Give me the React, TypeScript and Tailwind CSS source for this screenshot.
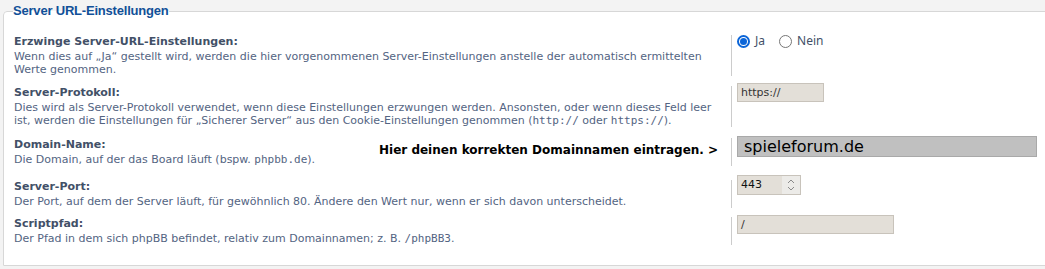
import React from "react";

const Code = ({ children }: { children: React.ReactNode }) => (
  <code className="font-['DejaVu_Sans_Mono',monospace] text-[11px] leading-[13px]">{children}</code>
);

function Row({
  label,
  desc,
  children,
  extra,
  pad,
}: {
  label: string;
  desc: React.ReactNode;
  children: React.ReactNode;
  extra?: React.ReactNode;
  pad: string;
}) {
  return (
    <div className={"flex " + pad}>
      <div className="w-[717px] shrink-0 relative">
        <div className="font-bold text-[#425067] leading-[14px]">{label}</div>
        <div className="text-[#536482] leading-[13px] mt-[1px]">{desc}</div>
        {extra}
      </div>
      <div className="border-l border-[#cccccc] pl-[5px] flex-1">{children}</div>
    </div>
  );
}

export default function App() {
  return (
    <div className="w-[1045px] h-[269px] overflow-hidden bg-[#f3f3f3] pt-[3px] font-['DejaVu_Sans',Verdana,sans-serif] text-[11px]">
      <fieldset className="ml-[3px] w-[1060px] bg-white border border-[#d7d7d7] rounded-tl-[4px] pl-[10px] pr-[20px] pb-[15px] pt-[11px]">
        <legend className="px-0 font-['Liberation_Sans',Arial,sans-serif] font-bold text-[13px] tracking-[-0.2px] text-[#115098] leading-[16px] ml-[-1px]">
          Server URL-Einstellungen
        </legend>
        <Row
          pad="pt-[5px] pb-[5px]"
          label="Erzwinge Server-URL-Einstellungen:"
          desc={
            <>
              <span className="block">
                Wenn dies auf „Ja“ gestellt wird, werden die hier vorgenommenen Server-Einstellungen anstelle der automatisch ermittelten
              </span>
              <span className="block">Werte genommen.</span>
            </>
          }
        >
          <div className="flex items-center h-[14px] mt-[-1px] font-['Noto_Sans',sans-serif] text-[12px] text-[#425067]">
            <span className="w-[13px] h-[13px] rounded-full border-2 border-[#0b65d8] flex items-center justify-center">
              <span className="w-[7px] h-[7px] rounded-full bg-[#0b65d8]" />
            </span>
            <span className="ml-[5px]">Ja</span>
            <span className="ml-[14px] w-[13px] h-[13px] rounded-full border border-[#767676]" />
            <span className="ml-[5px]">Nein</span>
          </div>
        </Row>
        <Row
          pad="pt-[5px] pb-[6px]"
          label="Server-Protokoll:"
          desc={
            <>
              <span className="block">
                Dies wird als Server-Protokoll verwendet, wenn diese Einstellungen erzwungen werden. Ansonsten, oder wenn dieses Feld leer
              </span>
              <span className="block">
                <span>ist, werden die Einstellungen für „Sicherer Server“ aus den Cookie-Einstellungen genommen (</span>
                <Code>http://</Code>
                <span> oder </span>
                <Code>https://</Code>
                <span>).</span>
              </span>
            </>
          }
        >
          <div className="mt-[-3px] w-[87px] h-[19px] bg-[#e3dfd8] border border-[#c8c3bb] text-[#333] leading-[17px] pl-[3px] font-['DejaVu_Sans',sans-serif] text-[11px]">
            https://
          </div>
        </Row>
        <Row
          pad="pt-[5px] pb-[9px]"
          label="Domain-Name:"
          desc={
            <>
              Die Domain, auf der das Board läuft (bspw. <Code>phpbb.de</Code>).
            </>
          }
          extra={
            <div className="absolute left-[365px] top-[3px] whitespace-nowrap font-['DejaVu_Sans',sans-serif] font-bold text-[12px] text-black">
              Hier deinen korrekten Domainnamen eintragen. &gt;
            </div>
          }
        >
          <div className="mt-[-2px] w-[300px] h-[21px] bg-[#c0c0c0] border border-[#a9a9a9] text-black leading-[19px] pl-[6px] font-['DejaVu_Sans',sans-serif] text-[16px]">
            spieleforum.de
          </div>
        </Row>
        <Row
          pad="pt-[5px] pb-[4px]"
          label="Server-Port:"
          desc={<>Der Port, auf dem der Server läuft, für gewöhnlich 80. Ändere den Wert nur, wenn er sich davon unterscheidet.</>}
        >
          <div className="mt-[-5px] w-[64px] h-[20px] bg-[#e3dfd8] border border-[#c8c3bb] flex items-stretch">
            <span className="flex-1 pl-[3px] leading-[18px] text-[#111] font-['DejaVu_Sans',sans-serif] text-[11px]">443</span>
            <span className="w-[18px] bg-[#ecebe8] flex flex-col items-center justify-center">
              <svg width="8" height="14" viewBox="0 0 8 14">
                <path d="M1 5 L4 2 L7 5" fill="none" stroke="#8a8a8a" strokeWidth="1" />
                <path d="M1 9 L4 12 L7 9" fill="none" stroke="#8a8a8a" strokeWidth="1" />
              </svg>
            </span>
          </div>
        </Row>
        <Row
          pad="pt-[5px] pb-[5px]"
          label="Scriptpfad:"
          desc={
            <>
              Der Pfad in dem sich phpBB befindet, relativ zum Domainnamen; z. B. <Code>/phpBB3</Code>.
            </>
          }
        >
          <div className="mt-[-2px] w-[157px] h-[19px] bg-[#e3dfd8] border border-[#c8c3bb] text-[#333] leading-[17px] pl-[3px] font-['DejaVu_Sans',sans-serif] text-[11px]">
            /
          </div>
        </Row>
      </fieldset>
    </div>
  );
}
